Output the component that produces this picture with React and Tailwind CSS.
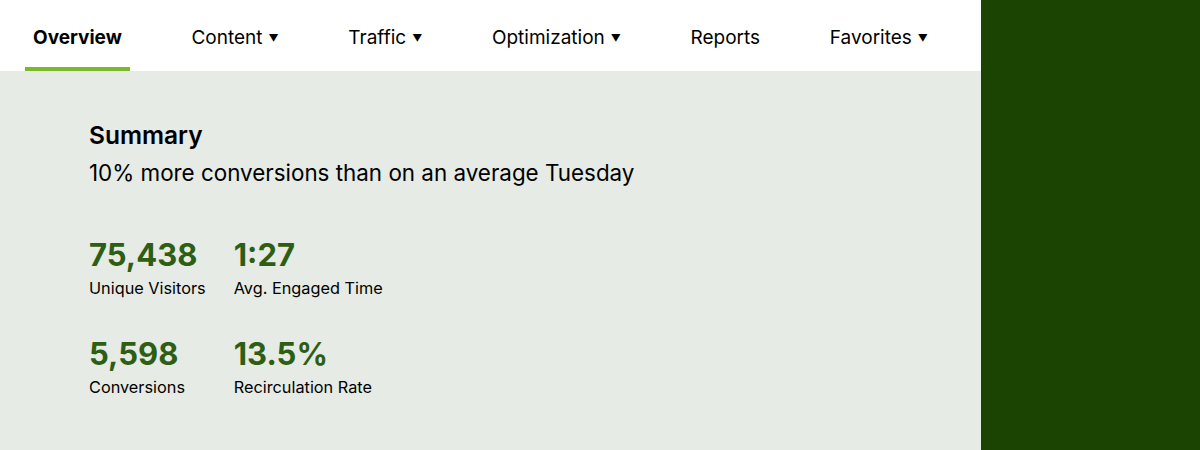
const tabs = [
    { label: "Overview", active: true },
    { label: "Content", menu: true },
    { label: "Traffic", menu: true },
    { label: "Optimization", menu: true },
    { label: "Reports" },
    { label: "Favorites", menu: true },
];

const stats = [
    { value: "75,438", label: "Unique Visitors" },
    { value: "1:27", label: "Avg. Engaged Time" },
    { value: "5,598", label: "Conversions" },
    { value: "13.5%", label: "Recirculation Rate" },
];

export default function App() {
    return (
        <div className="flex h-[450px] w-[1200px] font-['Inter',sans-serif] text-black">
            <div className="flex w-[981px] flex-col bg-[#e6ebe6]">
                <nav className="flex h-[71px] items-stretch gap-[53.7px] bg-white pl-[25px]">
                    {tabs.map((t) => (
                        <button
                            key={t.label}
                            type="button"
                            className={
                                "flex items-center border-b-4 px-2 pt-[9px] text-[19px] " +
                                (t.active ? "border-[#7aba28] font-bold" : "border-transparent")
                            }
                        >
                            {t.label}
                            {t.menu ? <span className="ml-[6px] text-[10px]">▼</span> : null}
                        </button>
                    ))}
                </nav>

                <section className="px-[89px] pt-[50px]">
                    <h2 className="text-[24.5px] font-semibold leading-7">Summary</h2>
                    <p className="mt-[10px] text-[22.4px] leading-7">10% more conversions than on an average Tuesday</p>

                    <div className="mt-[50px] grid w-fit grid-cols-[auto_auto] gap-x-[28px] gap-y-[38px]">
                        {stats.map((s) => (
                            <div key={s.label}>
                                <div className="text-[31px] font-bold leading-9 text-[#2d5e13]">{s.value}</div>
                                <div className="mt-[5px] text-[16.3px] leading-5">{s.label}</div>
                            </div>
                        ))}
                    </div>
                </section>
            </div>
            <div className="flex-1 bg-[#1b4301]" />
        </div>
    );
}
